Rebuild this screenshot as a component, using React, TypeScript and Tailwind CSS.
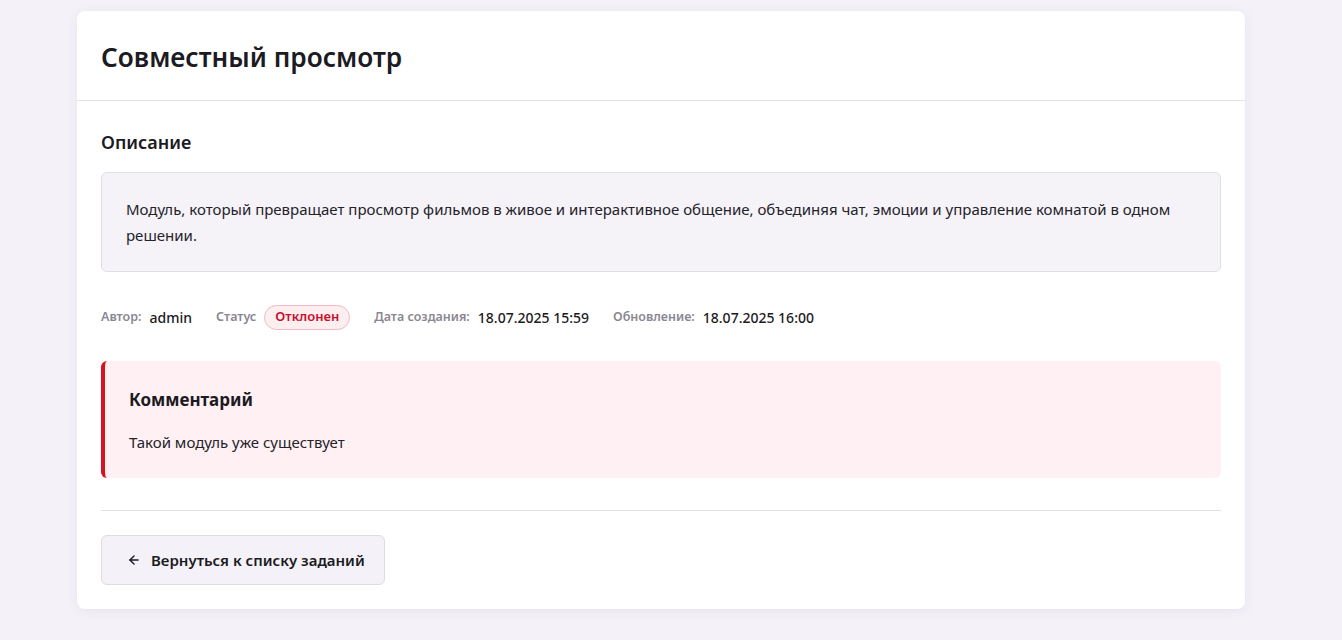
import React from 'react';

const FONT = { fontFamily: '"Noto Sans", "Open Sans", sans-serif' };

function MetaItem({ label, children }: { label: string; children: React.ReactNode }) {
  return (
    <div className="flex items-center gap-2">
      <span className="text-[12.5px] font-semibold text-[#8a8792]">{label}</span>
      {children}
    </div>
  );
}

export default function App() {
  return (
    <div className="min-h-[640px] bg-[#f4f2f8] pr-[20px] pt-[11px] pb-8" style={FONT}>
      <div className="mx-auto w-[1168px] rounded-lg bg-white shadow-[0_2px_12px_rgba(60,40,110,0.08)]">
        {/* Шапка */}
        <div className="border-b border-[#e2e0e6] px-6 pt-[4px] h-[90px] flex items-center">
          <h1 className="text-[26.2px] font-semibold text-[#1c1a22]">Совместный просмотр</h1>
        </div>

        <div className="px-6 pt-[28px] pb-6">
          <h2 className="text-[18px] font-semibold text-[#1c1a22] leading-[26px]">Описание</h2>

          <div className="mt-[17px] rounded-md border border-[#e0dee5] bg-[#f5f3f8] px-6 py-[23px]">
            <p className="text-[15px] leading-[26px] text-[#24222a]">
              Модуль, который превращает просмотр фильмов в живое и интерактивное общение, объединяя чат, эмоции и управление комнатой в одном решении.
            </p>
          </div>

          {/* Мета */}
          <div className="mt-[32px] flex items-center gap-6 h-[26px]">
            <MetaItem label="Автор:">
              <span className="text-[14px] font-medium text-[#1c1a22]">admin</span>
            </MetaItem>
            <MetaItem label="Статус">
              <span className="rounded-full border border-[#f3b9c2] bg-[#fdeef0] px-[10px] h-[25px] flex items-center text-[13px] font-semibold text-[#c8102e]">
                Отклонен
              </span>
            </MetaItem>
            <MetaItem label="Дата создания:">
              <span className="text-[14px] font-medium text-[#1c1a22]">18.07.2025 15:59</span>
            </MetaItem>
            <MetaItem label="Обновление:">
              <span className="text-[14px] font-medium text-[#1c1a22]">18.07.2025 16:00</span>
            </MetaItem>
          </div>

          {/* Комментарий */}
          <div className="mt-[31px] rounded-md border-l-4 border-[#d9121f] bg-[#fff1f3] pl-[24px] pr-6 pt-[26px] pb-[24px]">
            <h3 className="text-[17px] font-bold text-[#1c1a22] leading-[26px]">Комментарий</h3>
            <p className="mt-[17px] text-[15px] leading-[24px] text-[#24222a]">Такой модуль уже существует</p>
          </div>

          <div className="mt-[32px] border-t border-[#e2e0e6]" />

          <button className="mt-6 flex h-[50px] items-center gap-[10px] rounded-md border border-[#dedce3] bg-[#f4f2f8] pl-[25px] pr-[19px] text-[15px] font-semibold text-[#1c1a22]">
            <svg width="14" height="14" viewBox="0 0 24 24" fill="none" stroke="currentColor" strokeWidth="2.4" strokeLinecap="round" strokeLinejoin="round">
              <path d="M19 12H5" />
              <path d="M12 19l-7-7 7-7" />
            </svg>
            Вернуться к списку заданий
          </button>
        </div>
      </div>
    </div>
  );
}
